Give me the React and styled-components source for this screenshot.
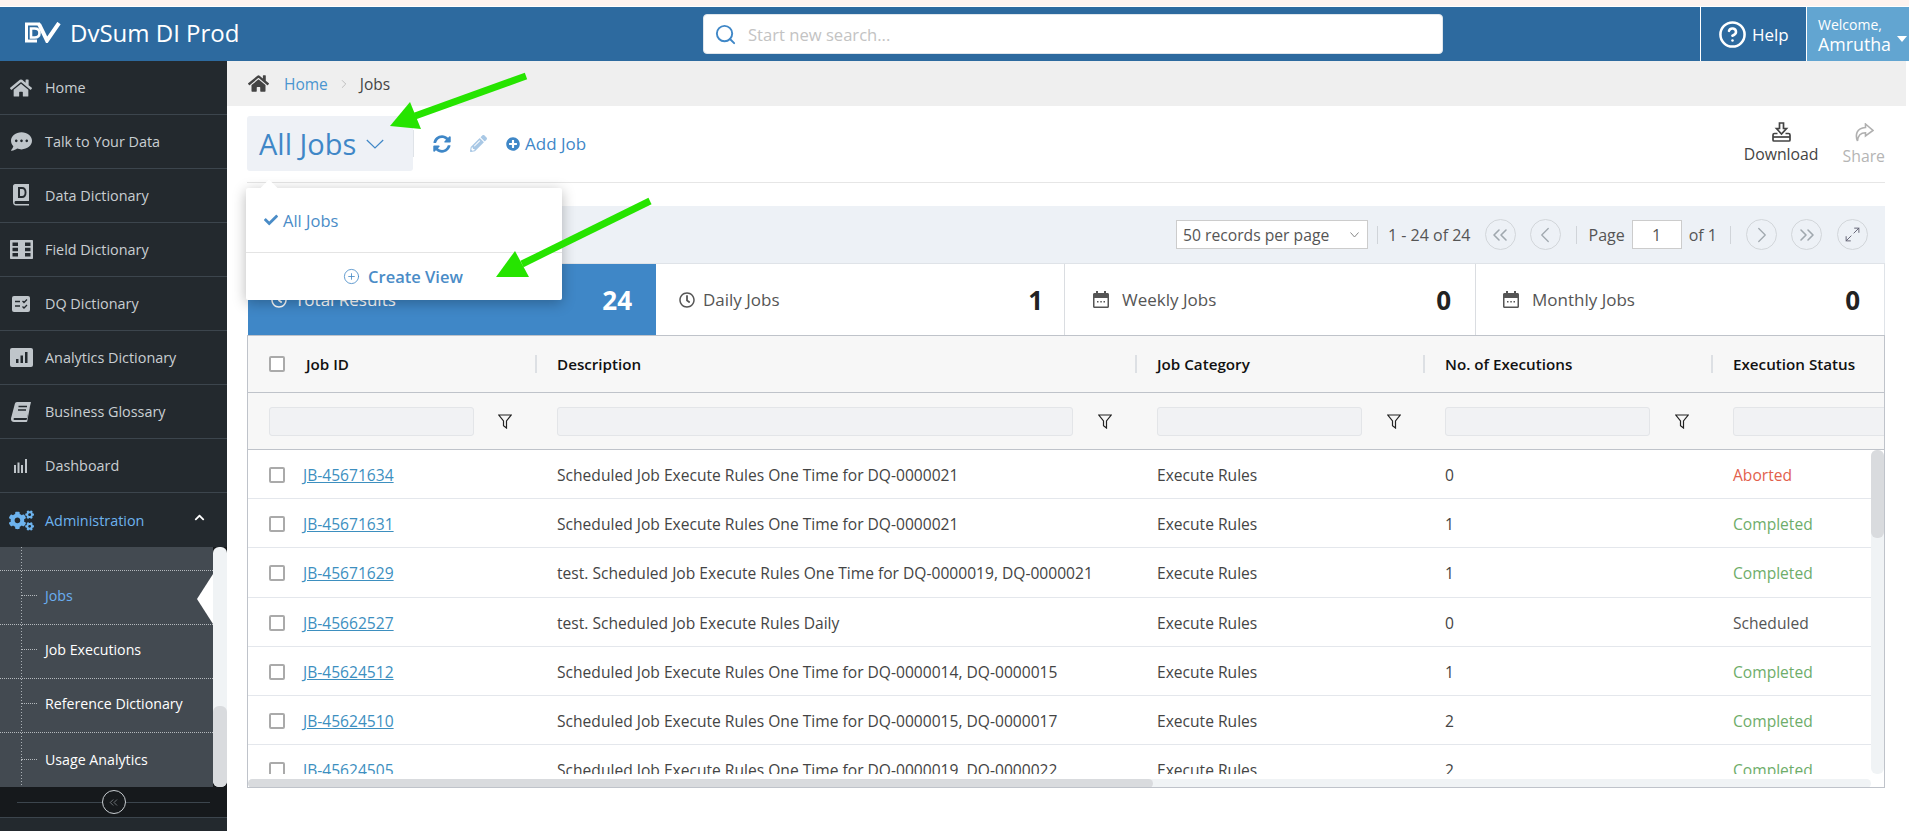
import React from 'react';
import styled, { createGlobalStyle } from 'styled-components';
import { FaHome, FaCommentDots, FaSyncAlt, FaPencilAlt, FaPlusCircle, FaCheck, FaCogs, FaRegClock, FaChevronUp } from 'react-icons/fa';
import { Search, ChevronRight, ChevronLeft, ChevronsLeft, ChevronsRight, Maximize2, CirclePlus, CircleHelp } from 'lucide-react';

const Global = createGlobalStyle`
  html, body { margin: 0; padding: 0; background: #fff; }
  body { font-family: "Open Sans", "Liberation Sans", sans-serif; font-size: 15px; color: #444; }
  * { box-sizing: border-box; }
`;

const Page = styled.div`
  position: relative; width: 1909px; height: 831px; overflow: hidden;
  display: flex; flex-direction: column; background: #fff;
`;
const TopStrip = styled.div`
  height: 7px; flex: none; background: #fff; border-top: 6px solid #fdf3ef;
`;
const Header = styled.header`
  height: 54px; flex: none; display: flex; align-items: stretch; background: #2d6a9f; color: #fff;
`;
const Brand = styled.div`
  width: 703px; flex: none; display: flex; align-items: center; gap: 9px; padding-left: 25px;
  font-size: 24px; padding-bottom: 4px;
`;
const SearchBox = styled.div`
  width: 740px; height: 40px; margin-top: 7px; background: #fff; border-radius: 4px; flex: none;
  display: flex; align-items: center; gap: 11px; padding-left: 10px; color: #c3c3c3; font-size: 16.6px;
  border: 1px solid #dfe6ec;
  svg { color: #3f87c7; }
`;
const Spacer = styled.div` flex: 1; `;
const HelpCell = styled.div`
  width: 107px; flex: none; display: flex; align-items: center; gap: 5px; padding-left: 17px;
  border-left: 1px solid #fff; border-right: 1px solid #fff; font-size: 17px;
`;
const UserCell = styled.div`
  width: 102px; flex: none; background: #62a5d1; padding: 8px 0 0 11px; position: relative;
  font-size: 14px; line-height: 20px;
  strong { display: block; font-weight: 400; font-size: 17.8px; line-height: 18px; }
`;
const Caret = styled.span`
  position: absolute; right: 2px; top: 29px; width: 0; height: 0;
  border-left: 5px solid transparent; border-right: 5px solid transparent; border-top: 6px solid #fff;
`;
const Body = styled.div` flex: 1; min-height: 0; display: flex; `;

const Sidebar = styled.nav`
  width: 227px; flex: none; background: #23292e; display: flex; flex-direction: column; color: #d3d7da;
`;
const NavItem = styled.div`
  height: 54px; flex: none; display: flex; align-items: center; border-bottom: 1px solid #3c454d;
  font-size: 14.4px; color: ${p => (p.$active ? '#6db3ee' : '#c9ced2')}; position: relative;
  ${p => (p.$noline ? 'border-bottom: none;' : '')}
`;
const NavIcon = styled.span`
  width: 45px; flex: none; display: flex; justify-content: center; padding-right: 3px;
  color: ${p => (p.$active ? '#6db3ee' : '#bfc5ca')};
`;
const NavChevron = styled.span`
  position: absolute; right: 22px; top: 19px; color: #fff; display: flex;
`;
const SubNav = styled.div`
  height: 240px; flex: none; display: flex; background: #16191c;
`;
const SubList = styled.div`
  width: 213px; flex: none; overflow: hidden; background-color: #434a51;
  background-image: repeating-linear-gradient(to bottom, #aab0b5 0 1px, transparent 1px 3px);
  background-size: 1px 100%; background-position: 21px 0; background-repeat: no-repeat;
`;
const SubHead = styled.div` height: 24px; border-bottom: 1px dotted #b4b9bd; `;
const SubItem = styled.div`
  height: 54px; display: flex; align-items: center; padding: 0 0 ${p => (p.$last ? 1 : 5)}px 21px; position: relative;
  border-bottom: ${p => (p.$last ? 'none' : '1px dotted #b4b9bd')};
  font-size: 14.2px; font-weight: ${p => (p.$active ? 400 : 500)}; color: ${p => (p.$active ? '#6aaef0' : '#fff')};
`;
const Stub = styled.span` width: 16px; border-top: 1px dotted #b4b9bd; margin-right: 8px; `;
const ActiveNotch = styled.span`
  position: absolute; right: 0; top: 3px; width: 16px; height: 50px; background: #fff;
  clip-path: polygon(100% 0, 100% 100%, 0 50%);
`;
const Track = styled.div`
  width: 14px; flex: none; background: #f0f3f5; border-radius: 6px; display: flex; align-items: flex-end;
`;
const Thumb = styled.div` width: 100%; height: 81px; background: #d9dbde; border-radius: 6px; `;
const SideFooter = styled.div`
  height: 31px; flex: none; background: #16191c; display: flex; align-items: center; padding: 0 17px;
  border-bottom: 1px solid #3c454d;
`;
const FooterLine = styled.span` flex: 1; height: 1px; background: #3c454d; `;
const CollapseBtn = styled.span`
  width: 24px; height: 24px; border: 1px solid #c8cdd1; border-radius: 50%; display: flex;
  align-items: center; justify-content: center; color: #9aa1a6;
`;

const Main = styled.main` flex: 1; min-width: 0; display: flex; flex-direction: column; `;
const Crumbs = styled.div`
  height: 45px; flex: none; margin-right: 3px; background: #efefef; display: flex; align-items: center;
  padding-left: 21px; font-size: 15.5px; color: #444;
`;
const CrumbLink = styled.a` color: #4a95d0; margin-left: 15px; `;
const CrumbSep = styled.span` display: flex; margin: 0 9px; color: #aaa; `;
const Content = styled.div` position: relative; flex: 1; min-height: 0; padding: 0 24px 0 20px; display: flex; flex-direction: column; `;
const Toolbar = styled.div`
  height: 77px; flex: none; display: flex; align-items: flex-start; border-bottom: 1px solid #e6e6e6; padding-top: 10px;
`;
const ViewButton = styled.div`
  width: 166px; height: 55px; background: #eef1f6; border-radius: 3px; display: flex; align-items: center;
  padding-left: 12px; gap: 10px; font-size: 29px; color: #3f87c7;
`;
const TbDivider = styled.span` width: 1px; height: 27px; background: #dfe3e8; margin-top: 14px; `;
const ToolIcons = styled.div`
  display: flex; align-items: center; height: 35px; margin: 10px 0 0 19px; font-size: 17px; color: #3f87c7;
`;
const ToolIcon = styled.span`
  display: flex; margin-right: ${p => p.$mr}px; color: ${p => p.$c || '#3f87c7'};
`;
const AddJob = styled.span` display: flex; align-items: center; gap: 5px; `;
const Actions = styled.div` margin-left: auto; display: flex; gap: 24px; align-items: flex-start; padding-top: 6px; `;
const Action = styled.div`
  display: flex; flex-direction: column; align-items: center; gap: ${p => (p.$off ? 2 : 1)}px; font-size: 15.8px; line-height: 22px;
  color: ${p => (p.$off ? '#b5b5b5' : '#444')}; svg { display: block; height: 20px; }
  margin-top: ${p => (p.$off ? '1px' : '0')};
`;
const Pager = styled.div`
  margin-top: 23px; height: 58px; flex: none; background: #edf1f6; display: flex; align-items: center;
  justify-content: flex-end; padding-right: 17px; font-size: 16px; color: #555;
  border-bottom: 1px solid #dfe3e8;
`;
const PageSelect = styled.div`
  width: 192px; height: 29px; background: #fff; border: 1px solid #ccc; display: flex; align-items: center;
  justify-content: space-between; padding: 0 8px 0 6px; font-size: 15.7px;
  svg { color: #888; }
`;
const PagerDivider = styled.span` width: 1px; height: 18px; background: #d0d4d9; margin: 0 ${p => p.$r}px 0 ${p => p.$l}px; `;
const RoundBtn = styled.span`
  width: 31px; height: 31px; border: 1px solid #d2d6da; border-radius: 50%; display: flex; flex: none;
  align-items: center; justify-content: center; color: ${p => p.$c || '#a0a8ae'};
  margin-left: ${p => p.$l || 0}px;
`;
const PageInput = styled.div`
  width: 50px; height: 29px; background: #fff; border: 1px solid #ccc; margin: 0 7px; display: flex; align-items: center; justify-content: center;
`;
const Stats = styled.div`
  height: 71px; flex: none; display: grid; grid-template-columns: 409px 409px 411px 1fr;
  border-right: 1px solid #dfe3e8;
`;
const Stat = styled.div`
  display: flex; align-items: center; padding: 0 ${p => p.$pr || 24}px 0 ${p => p.$pl || 23}px; font-size: 17px;
  background: ${p => (p.$on ? '#3f87c7' : '#fff')}; color: ${p => (p.$on ? '#fff' : '#555')};
  border-right: ${p => (p.$on || p.$end ? 'none' : '1px solid #dadde1')};
  margin-left: ${p => (p.$on ? '1px' : 0)};
`;
const StatLabel = styled.span` display: flex; align-items: center; gap: ${p => p.$g || 8}px; `;
const StatValue = styled.span`
  margin-left: auto; font-size: 26px; font-weight: 700; color: ${p => (p.$on ? '#fff' : '#222')};
`;
const TableWrap = styled.div`
  height: 453px; flex: none; border: 1px solid #bfc3ca; overflow: hidden; display: flex; flex-direction: column;
`;
const cols = '289px 600px 288px 288px 400px';
const HeadRow = styled.div`
  height: 57px; flex: none; display: grid; grid-template-columns: ${cols}; background: #f7f7f7;
  border-bottom: 1px solid #bfc3ca; align-items: center; font-size: 15.2px; font-weight: 600; color: #111;
`;
const HeadCell = styled.div`
  display: flex; align-items: center; height: 18px; padding-left: 20px;
  border-right: ${p => (p.$noBar ? 'none' : '2px solid #dde0e4')};
  &:first-child { padding-left: 21px; }
`;
const Check = styled.span`
  width: 16px; height: 16px; border: 2px solid #aaa; border-radius: 2px; background: #fff; flex: none;
  margin-left: ${p => p.$l || 0}px; margin-right: ${p => p.$r || 0}px;
`;
const FilterRow = styled.div`
  height: 57px; flex: none; display: grid; grid-template-columns: ${cols}; background: #f7f7f7;
  border-bottom: 1px solid #bfc3ca; align-items: center;
`;
const FilterCell = styled.div`
  display: flex; align-items: center; padding-left: 20px; gap: 25px;
  &:first-child { padding-left: 21px; gap: 24px; }
`;
const FilterInput = styled.div`
  width: ${p => p.$w || 205}px; height: 29px; flex: none; background: #f1f2f4; border: 1px solid #e3e5e8; border-radius: 3px;
`;
const TBody = styled.div` flex: 1; min-height: 0; display: flex; flex-direction: column; `;
const BodyMain = styled.div` height: 324px; display: flex; flex: none; `;
const Rows = styled.div` flex: 1; min-width: 0; overflow: hidden; `;
const Row = styled.div`
  height: 49.2px; padding-top: 2px; display: grid; grid-template-columns: ${cols}; align-items: center; border-bottom: 1px solid #e4e7ec;
  font-size: 15.6px; color: #444;
`;
const Cell = styled.div`
  padding-left: 20px; white-space: nowrap; display: flex; align-items: center;
  &:first-child { padding-left: 21px; }
`;
const JobLink = styled.a` color: #3d8fbf; text-decoration: underline; margin-left: 18px; `;
const Status = styled.span` color: ${p => ({ Aborted: '#e2604c', Completed: '#6ead6a' }[p.$s] || '#555')}; `;
const VTrack = styled.div` width: 13px; flex: none; background: #f0f3f5; border-radius: 6px; `;
const VThumb = styled.div` height: 88px; background: #d9dbde; border-radius: 6px; `;
const HTrack = styled.div`
  height: 9px; margin-top: 5px; width: 1623px; flex: none; background: #f0f3f5; border-radius: 5px;
`;
const HThumb = styled.div` height: 100%; width: 905px; background: #d9dbde; border-radius: 5px; `;

const Dropdown = styled.div`
  position: absolute; left: 19px; top: 82px; width: 316px; height: 112px; background: #fff; border-radius: 2px;
  box-shadow: 0 3px 14px rgba(0,0,0,.28); z-index: 3; color: #4a8cc7;
  &::before { content: ''; position: absolute; left: 17px; top: -6px; width: 12px; height: 12px; background: #fff; transform: rotate(45deg); }
`;
const DropItem = styled.div`
  height: 65px; display: flex; align-items: center; padding-left: 18px; gap: 5px; border-bottom: 1px solid #e4e4e4; font-size: 16.5px; position: relative;
`;
const DropAction = styled.div`
  height: 47px; display: flex; align-items: center; justify-content: center; gap: 8px; font-weight: 600; font-size: 16.5px; padding-right: 2px;
`;
const Overlay = styled.svg` position: absolute; left: 0; top: 0; z-index: 5; pointer-events: none; `;

const Logo = () => (
  <svg width="36" height="21" viewBox="0 0 36 21" fill="none">
    <path d="M15 2H1.500V19H12" stroke="#fff" strokeWidth="3" />
    <path d="M6 6.500H9.500C13 6.500 14.500 8.500 14.500 11C14.500 13.500 13 15.500 9.500 15.500H6Z" stroke="#fff" strokeWidth="2.600" />
    <path d="M14 2L22 18.500L34 1" stroke="#fff" strokeWidth="4" />
  </svg>
);
const Caretdown = () => (
  <svg width="18" height="10" viewBox="0 0 18 10" fill="none" stroke="#3f87c7" strokeWidth="1.200">
    <path d="M.8 1L9 9L17.200 1" />
  </svg>
);
const SmallCaret = () => (
  <svg width="9" height="6" viewBox="0 0 9 6" fill="none" stroke="#888" strokeWidth="1">
    <path d="M.5 .5L4.500 5L8.500 .5" />
  </svg>
);
const BookD = () => (
  <svg width="17" height="23" viewBox="0 0 17 23" fill="currentColor">
    <path fillRule="evenodd" d="M2 0H16V17H3C2 17 1.500 17.500 1.500 18.500C1.500 19.500 2 20 3 20H16V21.500H3C1 21.500 0 20 0 18V2C0 1 1 0 2 0ZM5 3V14H9C12 14 13.500 12 13.500 8.500C13.500 5 12 3 9 3ZM7 5H9C11 5 11.600 6.500 11.600 8.500C11.600 10.500 11 12 9 12H7Z" />
  </svg>
);
const Film = () => (
  <svg width="23" height="19" viewBox="0 0 23 19" fill="currentColor">
    <path fillRule="evenodd" d="M1 0H22C22.600 0 23 .4 23 1V18C23 18.600 22.600 19 22 19H1C.4 19 0 18.600 0 18V1C0 .4 .4 0 1 0ZM2.500 2.500V6H8V2.500ZM2.500 7.800V11.200H8V7.800ZM2.500 13V16.500H8V13ZM15 2.500V6H20.500V2.500ZM15 7.800V11.200H20.500V7.800ZM15 13V16.500H20.500V13Z" />
  </svg>
);
const DqIcon = () => (
  <svg width="18" height="16" viewBox="0 0 18 16">
    <rect width="18" height="16" rx="2" fill="currentColor" />
    <path d="M3 5.500H8M3 10H8M10.500 5L12 6.500L15 3.500M10.500 10.500L12 12L15 9" stroke="#23292e" strokeWidth="1.300" fill="none" />
  </svg>
);
const AnalyticsIcon = () => (
  <svg width="23" height="19" viewBox="0 0 23 19">
    <rect width="23" height="19" rx="2" fill="currentColor" />
    <path d="M6 11H8.500V15H6ZM10.500 7.500H13V15H10.500ZM15 4H17.500V15H15Z" fill="#23292e" />
  </svg>
);
const SlantBook = () => (
  <svg width="20" height="20" viewBox="0 0 20 20">
    <path fill="currentColor" d="M6 0H19.500C20 0 20 .5 19.800 1L16 16H4C3 16 2.500 16.500 2.500 17C2.500 17.700 3 18 4 18H15.500L16.800 14L17.800 5L18.800 5.500L16.300 19C16.200 19.600 15.800 20 15 20H3C1.200 20 0 18.800 0 17C0 16 .2 15.500 .5 14.500L3.800 2C4.100 .7 4.800 0 6 0Z" />
    <path d="M7.500 4.500H16M7 8H15" stroke="#23292e" strokeWidth="1.400" fill="none" />
  </svg>
);
const BarsIcon = () => (
  <svg width="14" height="14" viewBox="0 0 14 14" fill="currentColor">
    <rect x="0" y="6" width="2" height="8" /><rect x="3.500" y="3.500" width="2" height="10.500" />
    <rect x="7" y="6" width="2" height="8" /><rect x="11" y="0" width="2" height="14" />
  </svg>
);
const CalIcon = () => (
  <svg width="16" height="17" viewBox="0 0 16 17">
    <path fill="#555" d="M3 0H5V2H11V0H13V2H14.500C15.400 2 16 2.600 16 3.500V15.500C16 16.400 15.400 17 14.500 17H1.500C.6 17 0 16.400 0 15.500V3.500C0 2.600 .6 2 1.500 2H3ZM1.500 7V15.500H14.500V7Z" fillRule="evenodd" />
    <path fill="#555" d="M4 10H5.500V11.500H4ZM7.300 10H8.800V11.500H7.300ZM10.500 10H12V11.500H10.500Z" />
  </svg>
);
const Funnel = () => (
  <svg width="14" height="15" viewBox="0 0 14 15" fill="none" stroke="#222" strokeWidth="1.200">
    <path d="M.8 1H13.200L8.500 7V14L5.500 11.700V7Z" />
  </svg>
);
const DownloadIcon = () => (
  <svg width="19" height="20" viewBox="0 0 19 20" fill="none" stroke="#444" strokeWidth="1.700">
    <path d="M7.500 1H11.500V6.500H14.500L9.500 12L4.500 6.500H7.500Z" />
    <path d="M5.500 11.500H2.500C1.500 11.500 1 12 1 13V18C1 18.600 1.500 19 2 19H17C17.600 19 18 18.600 18 18V13C18 12 17.500 11.500 16.500 11.500H13.500" />
    <path d="M1 15H18" />
  </svg>
);
const ShareIcon = () => (
  <svg width="20" height="20" viewBox="0 0 20 20" fill="none" stroke="#b0b0b0" strokeWidth="1.600">
    <path d="M11.500 1L19 7.500L11.500 13V9.800C7 9.800 4 12 3.500 18C1 12 2.500 5 11.500 4.500Z" />
  </svg>
);

const navItems = [
  ['Home', <FaHome size={22} />],
  ['Talk to Your Data', <FaCommentDots size={21} />],
  ['Data Dictionary', <BookD />],
  ['Field Dictionary', <Film />],
  ['DQ Dictionary', <DqIcon />],
  ['Analytics Dictionary', <AnalyticsIcon />],
  ['Business Glossary', <SlantBook />],
  ['Dashboard', <BarsIcon />],
];

const R1 = 'Scheduled Job Execute Rules One Time for ';
const rows = [
  ['JB-45671634', R1 + 'DQ-0000021', '0', 'Aborted'],
  ['JB-45671631', R1 + 'DQ-0000021', '1', 'Completed'],
  ['JB-45671629', 'test. ' + R1 + 'DQ-0000019, DQ-0000021', '1', 'Completed'],
  ['JB-45662527', 'test. Scheduled Job Execute Rules Daily', '0', 'Scheduled'],
  ['JB-45624512', R1 + 'DQ-0000014, DQ-0000015', '1', 'Completed'],
  ['JB-45624510', R1 + 'DQ-0000015, DQ-0000017', '2', 'Completed'],
  ['JB-45624505', R1 + 'DQ-0000019, DQ-0000022', '2', 'Completed'],
];

export default function App() {
  return (
    <Page>
      <Global />
      <TopStrip />
      <Header>
        <Brand><Logo />DvSum DI Prod</Brand>
        <SearchBox><Search size={23} strokeWidth={2} />Start new search...</SearchBox>
        <Spacer />
        <HelpCell><CircleHelp size={29} strokeWidth={2.1} />Help</HelpCell>
        <UserCell>Welcome,<strong>Amrutha</strong><Caret /></UserCell>
      </Header>
      <Body>
        <Sidebar>
          {navItems.map(([label, icon]) => (
            <NavItem key={label}><NavIcon>{icon}</NavIcon>{label}</NavItem>
          ))}
          <NavItem $active $noline>
            <NavIcon $active><FaCogs size={25} /></NavIcon>Administration
            <NavChevron><FaChevronUp size={11} /></NavChevron>
          </NavItem>
          <SubNav>
            <SubList>
              <SubHead />
              <SubItem $active><Stub />Jobs<ActiveNotch /></SubItem>
              <SubItem><Stub />Job Executions</SubItem>
              <SubItem><Stub />Reference Dictionary</SubItem>
              <SubItem $last><Stub />Usage Analytics</SubItem>
            </SubList>
            <Track><Thumb /></Track>
          </SubNav>
          <SideFooter>
            <FooterLine />
            <CollapseBtn><ChevronsLeft size={13} strokeWidth={1.2} /></CollapseBtn>
            <FooterLine />
          </SideFooter>
        </Sidebar>
        <Main>
          <Crumbs>
            <FaHome size={21} color="#444" />
            <CrumbLink>Home</CrumbLink>
            <CrumbSep><ChevronRight size={14} strokeWidth={1.2} /></CrumbSep>
            Jobs
          </Crumbs>
          <Content>
            <Toolbar>
              <ViewButton>All Jobs<Caretdown /></ViewButton>
              <TbDivider />
              <ToolIcons>
                <ToolIcon $mr={19}><FaSyncAlt size={18} /></ToolIcon>
                <ToolIcon $mr={19} $c="#a9c8e5"><FaPencilAlt size={17} /></ToolIcon>
                <AddJob><FaPlusCircle size={14} />Add Job</AddJob>
              </ToolIcons>
              <Actions>
                <Action><DownloadIcon />Download</Action>
                <Action $off><ShareIcon />Share</Action>
              </Actions>
            </Toolbar>
            <Pager>
              <PageSelect>50 records per page<SmallCaret /></PageSelect>
              <PagerDivider $l={9} $r={10} />
              1 - 24 of 24
              <RoundBtn $l={14}><ChevronsLeft size={24} strokeWidth={1.6} /></RoundBtn>
              <RoundBtn $l={14}><ChevronLeft size={26} strokeWidth={1.2} /></RoundBtn>
              <PagerDivider $l={15} $r={12} />
              Page
              <PageInput>1</PageInput>
              of 1
              <PagerDivider $l={13} $r={15} />
              <RoundBtn><ChevronRight size={26} strokeWidth={1.2} /></RoundBtn>
              <RoundBtn $l={14}><ChevronsRight size={24} strokeWidth={1.6} /></RoundBtn>
              <RoundBtn $l={15} $c="#667"><Maximize2 size={17} strokeWidth={1.4} /></RoundBtn>
            </Pager>
            <Stats>
              <Stat $on><StatLabel><FaRegClock size={16} />Total Results</StatLabel><StatValue $on>24</StatValue></Stat>
              <Stat $pr={21}><StatLabel><FaRegClock size={16} />Daily Jobs</StatLabel><StatValue>1</StatValue></Stat>
              <Stat $pl={28}><StatLabel $g={13}><CalIcon />Weekly Jobs</StatLabel><StatValue>0</StatValue></Stat>
              <Stat $end $pl={27}><StatLabel $g={13}><CalIcon />Monthly Jobs</StatLabel><StatValue>0</StatValue></Stat>
            </Stats>
            <TableWrap>
              <HeadRow>
                <HeadCell><Check $r={21} />Job ID</HeadCell>
                <HeadCell>Description</HeadCell>
                <HeadCell>Job Category</HeadCell>
                <HeadCell>No. of Executions</HeadCell>
                <HeadCell $noBar>Execution Status</HeadCell>
              </HeadRow>
              <FilterRow>
                <FilterCell><FilterInput /><Funnel /></FilterCell>
                <FilterCell><FilterInput $w={516} /><Funnel /></FilterCell>
                <FilterCell><FilterInput /><Funnel /></FilterCell>
                <FilterCell><FilterInput /><Funnel /></FilterCell>
                <FilterCell><FilterInput /></FilterCell>
              </FilterRow>
              <TBody>
                <BodyMain>
                  <Rows>
                    {rows.map(r => (
                      <Row key={r[0]}>
                        <Cell><Check /><JobLink>{r[0]}</JobLink></Cell>
                        <Cell>{r[1]}</Cell>
                        <Cell>Execute Rules</Cell>
                        <Cell>{r[2]}</Cell>
                        <Cell><Status $s={r[3]}>{r[3]}</Status></Cell>
                      </Row>
                    ))}
                  </Rows>
                  <VTrack><VThumb /></VTrack>
                </BodyMain>
                <HTrack><HThumb /></HTrack>
              </TBody>
            </TableWrap>
            <Dropdown>
              <DropItem><FaCheck size={14} />All Jobs</DropItem>
              <DropAction><CirclePlus size={17} strokeWidth={1.2} />Create View</DropAction>
            </Dropdown>
          </Content>
        </Main>
      </Body>
      <Overlay width="1909" height="831" viewBox="0 0 1909 831">
        <g fill="#26e400" stroke="#26e400">
          <line x1="526" y1="76" x2="415" y2="116" strokeWidth="7" />
          <polygon points="390,126 410,102 421,129" strokeWidth="0" />
          <line x1="650" y1="201" x2="522" y2="264" strokeWidth="7" />
          <polygon points="496,277 515,251 529,277" strokeWidth="0" />
        </g>
      </Overlay>
    </Page>
  );
}
